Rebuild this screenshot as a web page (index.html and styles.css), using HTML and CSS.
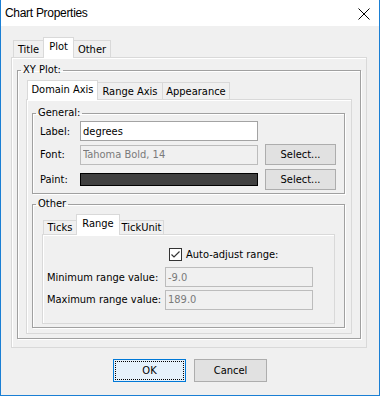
FILE: index.html
```html
<!DOCTYPE html>
<html lang="en">
<head>
  <meta charset="UTF-8" />
  <title>Chart Properties</title>
  <link rel="stylesheet" href="styles.css">
</head>
<body>
  <div class="window">
    <div class="titlebar">
      <span class="title">Chart Properties</span>
      <svg class="close" width="12" height="12" viewBox="0 0 12 12">
        <path d="M0.5 0.5 L11.5 11.5 M11.5 0.5 L0.5 11.5" stroke="#000" stroke-width="1" fill="none"/>
      </svg>
    </div>

    <div class="content">
      <div class="tabs outer-tabs">
        <div class="tab t-title">Title</div>
        <div class="tab active t-plot">Plot</div>
        <div class="tab t-other">Other</div>
      </div>

      <div class="panel outer-panel">
        <fieldset class="group xy-group">
          <legend>XY Plot:</legend>

          <div class="tabs axis-tabs">
            <div class="tab active t-domain">Domain Axis</div>
            <div class="tab t-range">Range Axis</div>
            <div class="tab t-appearance">Appearance</div>
          </div>

          <div class="panel axis-panel">
            <fieldset class="group general-group">
              <legend>General:</legend>
              <div class="general-grid">
                <span class="lbl">Label:</span>
                <input class="field" type="text" value="degrees">
                <span></span>

                <span class="lbl">Font:</span>
                <input class="field disabled" type="text" value="Tahoma Bold, 14" readonly>
                <button class="btn select-btn">Select...</button>

                <span class="lbl">Paint:</span>
                <div class="paint"></div>
                <button class="btn select-btn">Select...</button>
              </div>
            </fieldset>

            <fieldset class="group other-group">
              <legend>Other</legend>

              <div class="tabs range-tabs">
                <div class="tab t-ticks">Ticks</div>
                <div class="tab active t-rng">Range</div>
                <div class="tab t-tickunit">TickUnit</div>
              </div>

              <div class="panel range-panel">
                <div class="range-grid">
                  <span></span>
                  <label class="check-row">
                    <svg class="check" width="13" height="13" viewBox="0 0 13 13">
                      <rect x="0.5" y="0.5" width="12" height="12" fill="#fff" stroke="#333"/>
                      <path d="M2.5 6.5 L5 9 L10.5 3.5" stroke="#333" stroke-width="1.2" fill="none"/>
                    </svg>
                    <span>Auto-adjust range:</span>
                  </label>

                  <span class="lbl">Minimum range value:</span>
                  <input class="field disabled" type="text" value="-9.0" readonly>

                  <span class="lbl">Maximum range value:</span>
                  <input class="field disabled" type="text" value="189.0" readonly>
                </div>
              </div>
            </fieldset>
          </div>
        </fieldset>
      </div>

      <div class="actions">
        <button class="btn dlg-btn default">OK</button>
        <button class="btn dlg-btn">Cancel</button>
      </div>
    </div>
  </div>
</body>
</html>
```

FILE: styles.css
```css
* {
  box-sizing: border-box;
}

body {
  margin: 0;
  font-family: 'DejaVu Sans Condensed', 'Liberation Sans', Arial, sans-serif;
  font-size: 11px;
  color: #000;
}

.window {
  width: 380px;
  height: 396px;
  border: 1px solid #1a7fd4;
  border-top: none;
  background: #f0f0f0;
}

.titlebar {
  height: 26px;
  background: #fff;
  display: flex;
  align-items: center;
  justify-content: space-between;
  padding: 0 9px 0 4px;
}

.title {
  font-family: 'Liberation Sans', Arial, sans-serif;
  font-size: 12px;
  letter-spacing: -0.3px;
}

.close {
  margin-top: 1px;
}

.content {
  padding: 11px 12px 0 10px;
}

/* tabs */

.tabs {
  display: flex;
  align-items: flex-end;
  position: relative;
  z-index: 1;
  margin-bottom: -1px;
}

.tab {
  border: 1px solid #d9d9d9;
  border-bottom: none;
  background: #f0f0f0;
  text-align: center;
  line-height: 13px;
  margin-left: -1px;
  margin-bottom: 1px;
  white-space: nowrap;
}

.tab.active {
  background: #fff;
  margin-bottom: 0;
}

.outer-tabs .tab {
  height: 17px;
  padding-top: 2px;
}

.outer-tabs .tab.active {
  height: 21px;
}

.t-title { width: 31px; margin-left: 2px; }
.t-plot { width: 31px; }
.t-other { width: 38px; }

.axis-tabs .tab {
  height: 17px;
  padding-top: 2px;
}

.axis-tabs .tab.active {
  height: 20px;
}

.t-domain { width: 71px; margin-left: 1px; }
.t-range { width: 66px; }
.t-appearance { width: 68px; }

.range-tabs .tab {
  height: 14px;
  line-height: 11px;
  padding-top: 1px;
}

.range-tabs .tab.active {
  height: 21px;
  line-height: 13px;
  padding-top: 2px;
}

.t-ticks { width: 34px; margin-left: 1px; }
.t-rng { width: 44px; }
.t-tickunit { width: 45px; }

.panel {
  border: 1px solid #d9d9d9;
  box-shadow: inset 1px 1px 0 #fff;
}

.outer-panel {
  height: 291px;
  padding: 5px 5px 6px 5px;
}

.axis-panel {
  padding: 6px 6px 5px 5px;
}

.range-panel {
  padding: 10px 4px 13px 4px;
}

/* titled groups */

.group {
  margin: 0;
  min-width: 0;
  border: 1px solid #a0a0a0;
  box-shadow: inset 1px 1px 0 #fff, 1px 1px 0 #fff;
}

.group legend {
  padding: 0 2px;
  line-height: 14px;
}

.xy-group {
  padding: 3px 8px 4px 8px;
}

.xy-group > legend {
  margin-left: -5px;
}

.general-group {
  padding: 1px 7px 4px 7px;
}

.general-group > legend {
  margin-left: -4px;
}

.other-group {
  margin-top: 3px;
  padding: 3px 9px 3px 9px;
}

.other-group > legend {
  margin-left: -6px;
}

/* form rows */

.general-grid {
  display: grid;
  grid-template-columns: 40px 178px 71px;
  grid-template-rows: 20px 21px 21px;
  column-gap: 0;
  row-gap: 3px;
  align-items: center;
}

.general-grid .select-btn {
  margin-left: 7px;
  width: 71px;
}

.general-grid > :nth-child(n+7) {
  margin-top: 2px;
}

.field {
  font: inherit;
  color: #000;
  height: 20px;
  width: 100%;
  border: 1px solid #a3a3a3;
  background: #fff;
  padding: 0 2px;
  margin: 0;
  outline: none;
}

.field.disabled {
  background: #f0f0f0;
  color: #7a7a7a;
  border-color: #bcbcbc;
}

.paint {
  height: 13px;
  border: 1px solid #000;
  background: #404040;
}

.btn {
  font: inherit;
  color: #000;
  background: #e1e1e1;
  border: 1px solid #adadad;
  padding: 0;
  margin: 0;
}

.select-btn {
  height: 21px;
}

.range-grid {
  display: grid;
  grid-template-columns: 118px 148px;
  grid-template-rows: 19px 20px 20px;
  row-gap: 3px;
  align-items: center;
}

.range-grid > :nth-child(n+5) {
  margin-top: -1px;
}

.check-row {
  display: flex;
  align-items: center;
  gap: 4px;
  padding-left: 4px;
}

.check {
  display: block;
}

/* dialog buttons */

.actions {
  display: flex;
  justify-content: center;
  gap: 8px;
  margin-top: 11px;
  padding-left: 2px;
}

.dlg-btn {
  width: 73px;
  height: 23px;
}

.dlg-btn.default {
  background: #e5f1fb;
  border-color: #0078d7;
  outline: 1px dotted #000;
  outline-offset: -3px;
}
```
